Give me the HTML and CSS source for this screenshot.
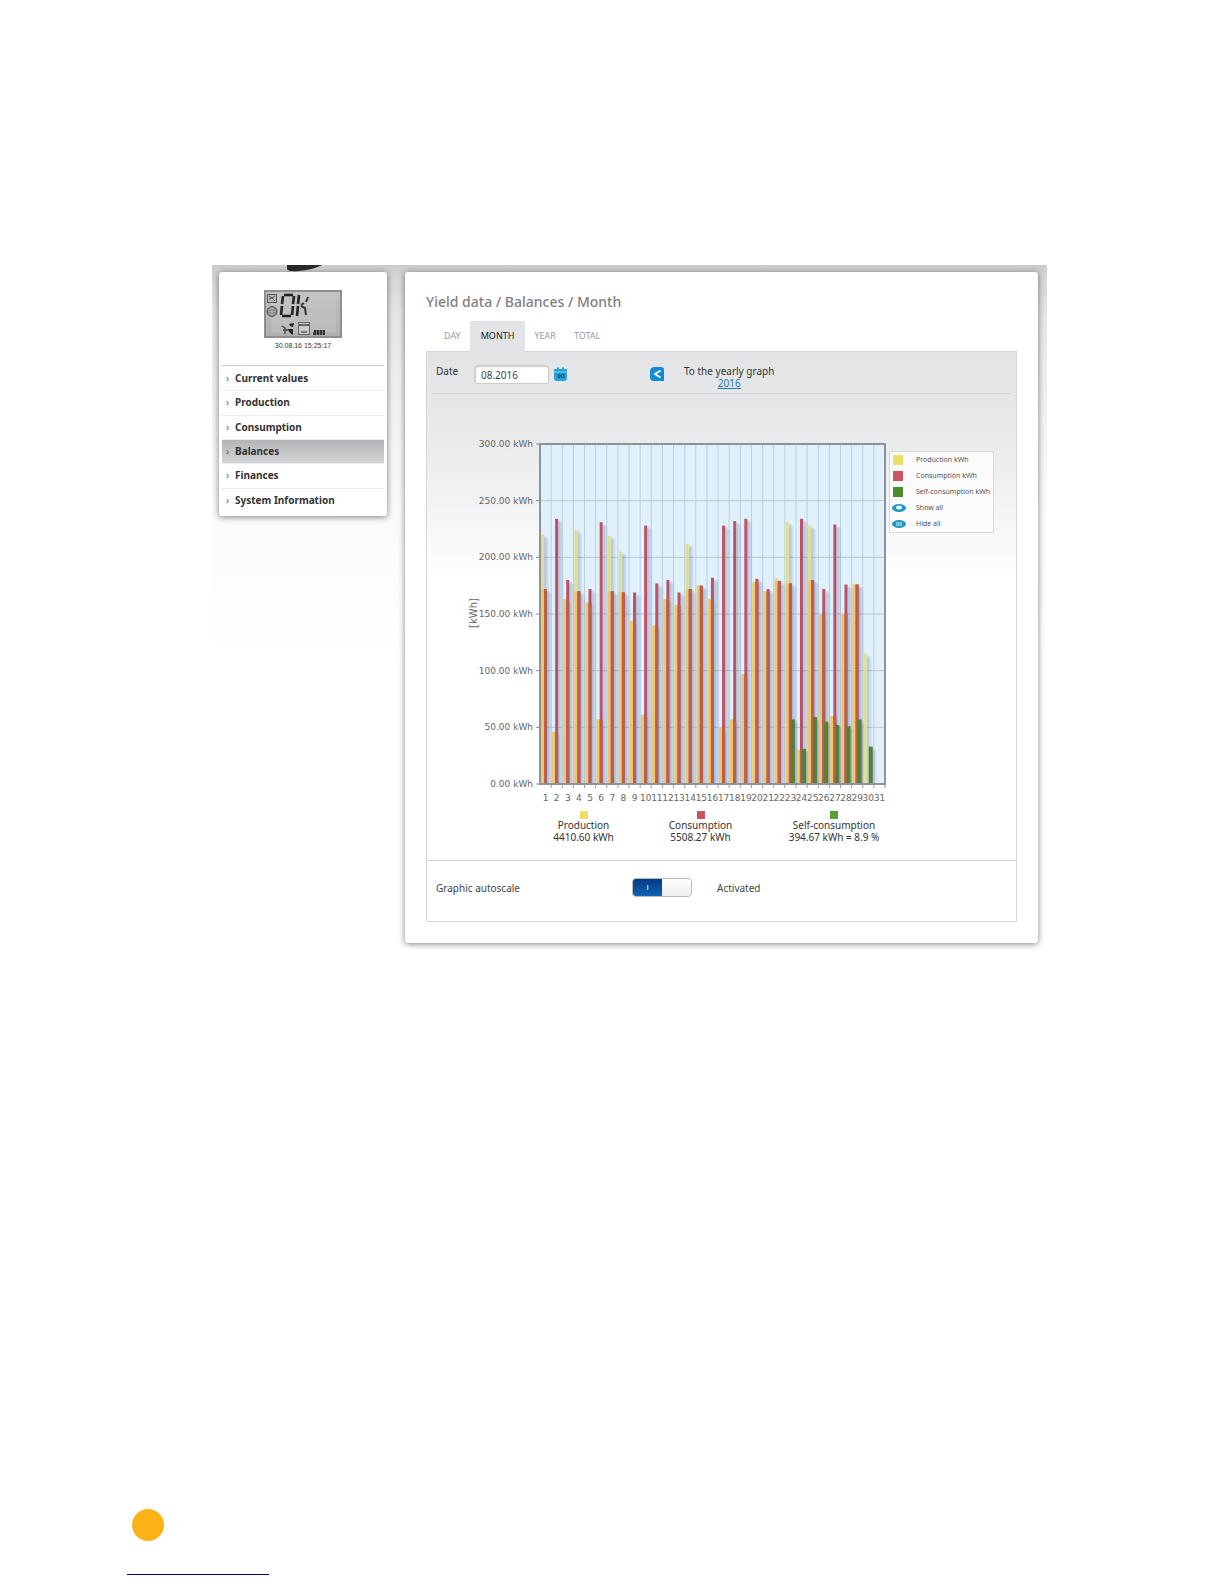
FILE: index.html
```html
<!DOCTYPE html>
<html lang="en">
<head>
<meta charset="utf-8">
<title>Yield data / Balances / Month</title>
<link rel="stylesheet" href="styles.css">
</head>
<body>
<div class="screen">
  <svg class="logo-edge" width="40" height="7" viewBox="0 0 40 7" aria-hidden="true"><path d="M2 0H37Q28 5 13 6Q4 7 2 4Z" fill="#26282c"/></svg>
  <aside class="sidebar">
    <div class="device">
      <svg width="78" height="48" viewBox="0 0 78 48" role="img" aria-label="Device display: OK">
        <defs><linearGradient id="lcd" x1="0" y1="0" x2="0" y2="1"><stop offset="0" stop-color="#c2c2c2"/><stop offset="1" stop-color="#aeaeae"/></linearGradient></defs>
        <rect x="1" y="1" width="76" height="46" fill="url(#lcd)" stroke="#8f8f8f" stroke-width="2"/>
        <path d="M7 3H72V43H7Z" fill="#c5c5c5" opacity=".5"/>
        <rect x="3.500" y="4.500" width="9" height="8" fill="#bbb" stroke="#555"/>
        <path d="M5 6L8 8L11 6M5 9L8 8L11 11" fill="none" stroke="#555"/>
        <circle cx="8" cy="21.500" r="5" fill="#888" stroke="#555"/>
        <path d="M4 21.500H12M8 17V26M5 19H11M5 24H11" stroke="#c0c0c0" stroke-width=".6"/>
        <g fill="none" stroke="#222" stroke-width="2.600">
          <path d="M20 5H29"/><path d="M19 6L18 14"/><path d="M30 6L29 14"/><path d="M18 16L17 25"/><path d="M29 16L28 25"/><path d="M18 26H27"/>
          <path d="M35 5L34 14M34 16L33 26"/>
        </g>
        <path d="M44 7L42 12M37 15L40 13M37 16L41 18L42 25" fill="none" stroke="#333" stroke-width="2"/>
        <path d="M18 36L21 38L21 44M19 40H25" stroke="#444" stroke-width="1.400" fill="none"/>
        <path d="M25 34L30 33L29 37L26 36ZM24 39L29 39L29 45L26 43Z" fill="#222"/>
        <rect x="34.500" y="32.500" width="11" height="12" fill="#ccc" stroke="#666"/>
        <path d="M34 35H46" stroke="#666" stroke-width="2"/><path d="M37 42H43" stroke="#777" stroke-width="2"/>
        <path d="M50 40H61V45H49Z" fill="#333"/><path d="M52.500 40V45M55.500 40V45M58.500 40V45" stroke="#999" stroke-width=".7"/>
      </svg>
      <time class="stamp">30.08.16 15:25:17</time>
    </div>
    <nav>
      <ul class="menu">
        <li><a href="#current">Current values</a></li>
        <li><a href="#production">Production</a></li>
        <li><a href="#consumption">Consumption</a></li>
        <li><a class="active" href="#balances">Balances</a></li>
        <li><a href="#finances">Finances</a></li>
        <li><a href="#system">System Information</a></li>
      </ul>
    </nav>
  </aside>

  <main class="card">
    <h1>Yield data / Balances / Month</h1>
    <nav class="tabs">
      <a href="#day">DAY</a>
      <a class="active" href="#month">MONTH</a>
      <a href="#year">YEAR</a>
      <a href="#total">TOTAL</a>
    </nav>
    <section class="panel">
      <div class="filter">
        <label for="date">Date</label>
        <input id="date" type="text" value="08.2016">
        <button class="icon-button calendar" type="button" aria-label="Choose date">
          <svg width="13" height="14" viewBox="0 0 13 14"><path d="M1 2H3V1Q4 -1 5 1V2H8V1Q9 -1 10 1V2H12Q13 2 13 3V11Q13 14 10 14H3Q0 14 0 11V3Q0 2 1 2Z" fill="#2b9fd6"/><path d="M0 5H13" stroke="#7fcbea"/><path d="M3.500 7.500H6V10.500H3.500M4 9H6M7.500 7.500H10V10.500H7.500Z" fill="none" stroke="#0b5687"/></svg>
        </button>
        <button class="icon-button back" type="button" aria-label="Back">
          <svg width="14" height="14" viewBox="0 0 14 14"><path d="M5 0H11Q14 0 14 3V14H4Q0 14 0 10V5Q0 0 5 0Z" fill="#1489d6"/><path d="M10.500 3.500L5 7L10.500 10.500" fill="none" stroke="#fff" stroke-width="1.800"/></svg>
        </button>
        <p class="yearly">To the yearly graph<br><a href="#2016">2016</a></p>
      </div>
      <div class="chart-row">
        <svg class="chart" id="chart" width="427" height="372" viewBox="0 0 427 372" role="img" aria-label="Monthly balance in kWh"></svg>
        <ul class="legend">
          <li><i class="swatch production"></i>Production kWh</li>
          <li><i class="swatch consumption"></i>Consumption kWh</li>
          <li><i class="swatch self"></i>Self-consumption kWh</li>
          <li><svg width="14" height="8" viewBox="0 0 14 8"><ellipse cx="7" cy="4" rx="7" ry="4" fill="#2397bd"/><ellipse cx="7" cy="3.500" rx="3" ry="2" fill="#e8f8fc"/></svg><button type="button">Show all</button></li>
          <li><svg width="14" height="8" viewBox="0 0 14 8"><ellipse cx="7" cy="4" rx="7" ry="4" fill="#2397bd"/><path d="M5 2V6M7 2V6M9 2V6" stroke="#c8ecf5"/></svg><button type="button">Hide all</button></li>
        </ul>
      </div>
      <div class="totals">
        <div><i class="swatch production"></i><span>Production</span><span>4410.60 kWh</span></div>
        <div><i class="swatch consumption"></i><span>Consumption</span><span>5508.27 kWh</span></div>
        <div><i class="swatch self-total"></i><span>Self-consumption</span><span>394.67 kWh = 8.9 %</span></div>
      </div>
      <div class="autoscale">
        <label for="autoscale">Graphic autoscale</label>
        <input id="autoscale" type="checkbox" checked>
        <span>Activated</span>
      </div>
    </section>
  </main>
</div>
<footer class="page-footer">
  <div class="dot"></div>
  <div class="rule"></div>
</footer>
<script src="chart.js"></script>
</body>
</html>
```
FILE: styles.css
```css
* { box-sizing: border-box; }

body {
  margin: 0;
  background: #fff;
  color: #444;
  font: 10px/12px "Noto Sans", sans-serif;
}

ul { list-style: none; margin: 0; padding: 0; }
a { color: inherit; text-decoration: none; }
button { padding: 0; border: 0; background: none; color: inherit; font: inherit; }

.screen {
  position: relative;
  display: grid;
  grid-template-columns: 168px minmax(0, 1fr);
  align-items: start;
  gap: 18px;
  margin: 265px 177px 0 212px;
  padding: 7px 9px 13px 7px;
  overflow: hidden;
  background: linear-gradient(#cbcbcb 0, #d6d6d6 12px, #e6e6e6 50px, #f2f2f2 150px, #fbfbfb 260px, #fff 400px);
}

.logo-edge { position: absolute; top: 0; left: 73px; }

.sidebar, .card {
  background: #fff;
  border-radius: 3px;
  box-shadow: 0 1px 6px rgba(0, 0, 0, .5);
}

.sidebar { padding: 18px 3px 4px; }

.device {
  display: flex;
  flex-direction: column;
  align-items: center;
  height: 75px;
}

.stamp { margin-top: 2px; color: #333; font: 7px/12px "Liberation Sans", sans-serif; }

.menu {
  display: grid;
  grid-auto-rows: 1fr;
  height: 147px;
  border-top: 1px solid #ccc;
}

.menu a {
  display: flex;
  align-items: center;
  height: 100%;
  padding: 0 0 1px 4px;
  color: #333;
  font-size: 10px;
  font-weight: 700;
}

.menu li + li { border-top: 1px solid #eee; }
.menu a::before { content: "›"; width: 9px; color: #666; font-weight: 400; }
.menu a.active { background: linear-gradient(#b2b4b6, #d3d5d7); }

.card { padding: 20px 21px 21px; }

h1 { margin: 0; color: #808080; font-size: 14px; font-weight: 500; line-height: 20px; }

.tabs { display: flex; margin: 9px 0 -1px 9px; position: relative; }
.tabs a { padding: 9px 9px 10px; color: #999; font-size: 9px; }
.tabs a.active { padding: 9px 11px 10px; background: #e3e4e6; color: #222; }

.panel {
  border: 1px solid #d5d6d8;
  background: linear-gradient(#e3e4e6 0, #e8e9eb 80px, #fff 230px);
}

.filter {
  display: flex;
  align-items: flex-start;
  height: 42px;
  margin: 0 5px;
  padding: 13px 0 0 4px;
  border-bottom: 1px solid #d6d7d9;
  color: #333;
}

.filter label { width: 38px; }

.filter input {
  width: 75px;
  height: 19px;
  padding: 1px 6px;
  border: 1px solid #ccc;
  border-radius: 3px;
  background: #fff;
  box-shadow: inset 1px 1px 2px rgba(0, 0, 0, .2);
  color: #444;
  font: inherit;
}

.icon-button { display: block; margin-top: 2px; }
.icon-button svg { display: block; }
.calendar { margin-left: 5px; }
.back { margin-left: 83px; }
.yearly { margin: 0 0 0 20px; text-align: center; }
.yearly a { color: #2479b5; text-decoration: underline; }

.chart-row { display: flex; align-items: flex-start; padding: 40px 0 0 35px; }
.chart { display: block; flex: none; }

.chart text { fill: #666; font: 9px "DejaVu Sans", sans-serif; }
.chart .axis-title { font-size: 10px; }

.legend {
  display: grid;
  grid-auto-rows: 16px;
  margin-top: 17px;
  padding: 0 3px 0 2px;
  border: 1px solid #d8d8d8;
  background: #fbfbfb;
  color: #555;
  font-size: 7px;
}

.legend li { display: grid; grid-template-columns: 24px auto; align-items: center; white-space: nowrap; }
.legend button { text-align: left; }

.swatch { display: block; width: 8px; height: 8px; }
.legend .swatch { width: 10px; height: 10px; margin-left: 1px; }
.production { background: #ebdf69; }
.consumption { background: #c95560; }
.self { background: #4b8b2c; }
.self-total { background: #58a03e; }

.totals {
  display: grid;
  grid-template-columns: 117px 117px 150px;
  padding: 5px 0 17px 98px;
  color: #333;
  white-space: nowrap;
}

.totals div { display: flex; flex-direction: column; align-items: center; }

.autoscale {
  display: grid;
  grid-template-columns: 196px 85px 1fr;
  align-items: center;
  height: 61px;
  padding: 0 0 7px 9px;
  border-top: 1px solid #d5d6d8;
  background: #fff;
}

.autoscale input {
  appearance: none;
  display: flex;
  width: 60px;
  height: 19px;
  margin: 0;
  overflow: hidden;
  border: 1px solid #bbb;
  border-radius: 4px;
  background: linear-gradient(#fff, #eee);
}

.autoscale input:checked::before {
  content: "I";
  width: 29px;
  background: linear-gradient(#053a86, #0c65b4);
  color: #fff;
  font: 8px/18px "Liberation Sans", sans-serif;
  text-align: center;
}

.page-footer { margin: 553px 127px 0; padding-bottom: 8px; }
.dot { width: 32px; height: 32px; margin-left: 5px; border-radius: 50%; background: #fbb216; }
.rule { width: 142px; height: 1px; margin-top: 33px; background: #00008b; }
```
FILE: chart.js
```js
const production = [220, 46, 163, 224, 160, 57, 219, 205, 144, 61, 140, 163, 158, 212, 175, 163, 50, 57, 97, 178, 170, 182, 231, 30, 228, 150, 60, 150, 177, 115, 0];
const consumption = [172, 234, 180, 170, 172, 231, 170, 169, 169, 228, 177, 180, 169, 172, 175, 182, 228, 232, 234, 181, 172, 179, 177, 234, 180, 172, 229, 176, 176, 0, 0];
const self = { 23: 57, 24: 31, 25: 59, 26: 55, 27: 52, 28: 51, 29: 57, 30: 33 };

const left = 78, right = 423, top_ = 10, bottom = 350;
const step = (right - left) / 31;
const y = v => bottom - v / 300 * (bottom - top_);
const parts = [];

const rect = (x, v, fill, w = 3) =>
  parts.push(`<rect x="${x}" y="${y(v)}" width="${w}" height="${bottom - y(v)}" fill="${fill}"/>`);
const shadow = (x, v) => {
  if (!v) return;
  for (let i = 1; i <= 4; i++) {
    const t = y(v) + i;
    parts.push(`<rect x="${x}" y="${t}" width="${1 + i}" height="${Math.max(0, bottom - t)}" fill="#4a4a70" opacity=".06"/>`);
  }
};

// Plot background and grid
parts.push(`<rect x="${left}" y="${top_}" width="${right - left}" height="${bottom - top_}" fill="#e0f1fc"/>`);
for (let i = 1; i < 31; i++) {
  const x = left + i * step;
  parts.push(`<path d="M${x} ${top_}V${bottom}" stroke="#b9d0df"/>`);
}
for (let v = 50; v < 300; v += 50) {
  parts.push(`<path d="M${left} ${y(v)}H${right}" stroke="#b9c8d2"/>`);
}

// Daily bars, one series over the other
for (let d = 1; d <= 31; d++) {
  const x = left + (d - 1) * step;
  const p = production[d - 1], c = consumption[d - 1], s = self[d] || 0;
  shadow(x + 4, p);
  rect(x + 1, p, '#dfe08f');
  rect(x + 1, Math.min(p, c), '#f2c56d');
  shadow(x + 7, c);
  rect(x + 4, c, '#bb5268', 3);
  rect(x + 4, Math.min(p, c), '#b95f50', 3);
  shadow(x + 9, s);
  rect(x + 6, s, '#557f35', 4);
}

// Frame, ticks and labels
parts.push(`<rect x="${left}" y="${top_}" width="${right - left}" height="${bottom - top_}" fill="none" stroke="#8d9398" stroke-width="2"/>`);
for (let v = 0; v <= 300; v += 50) {
  parts.push(`<path d="M${left - 4} ${y(v)}H${left}" stroke="#888"/>`);
  parts.push(`<text x="${left - 7}" y="${y(v) + 3}" text-anchor="end">${v}.00 kWh</text>`);
}
for (let d = 1; d <= 31; d++) {
  const x = left + (d - .5) * step;
  parts.push(`<path d="M${left + d * step} ${bottom}v4" stroke="#999"/>`);
  parts.push(`<text x="${x}" y="367" text-anchor="middle">${d}</text>`);
}
parts.push(`<text class="axis-title" transform="translate(15 179) rotate(-90)" text-anchor="middle">[kWh]</text>`);

document.getElementById('chart').innerHTML = parts.join('');
```
